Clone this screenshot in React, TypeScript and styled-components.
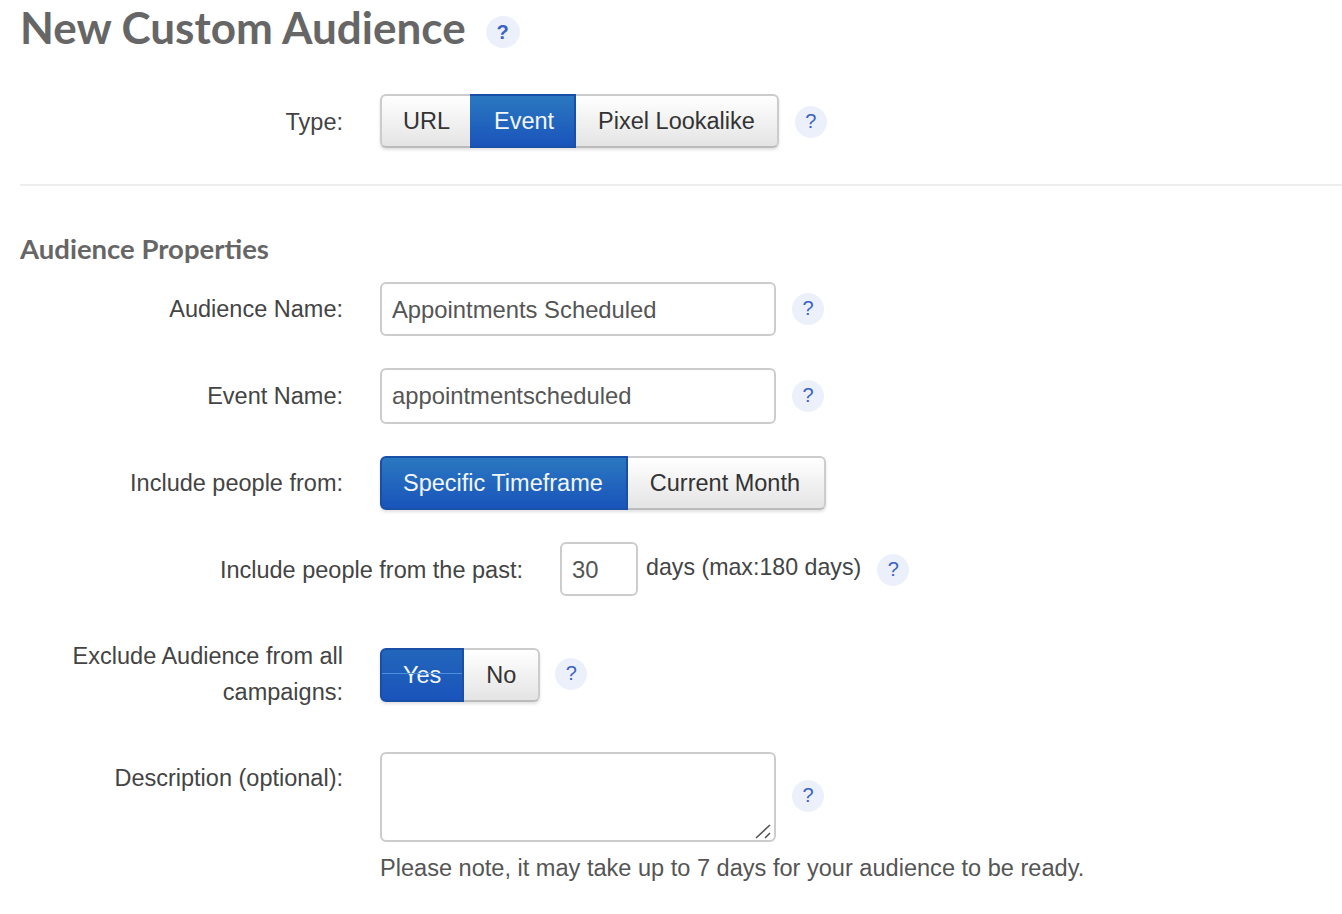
import styled, { createGlobalStyle } from "styled-components";

const GlobalStyle = createGlobalStyle`
  html, body {
    margin: 0;
    background: #fff;
  }
  body {
    font-family: "Liberation Sans", Arial, sans-serif;
    font-size: 23.5px;
    color: #444;
    overflow: hidden;
  }
`;

const Page = styled.div`
  padding: 0 0 0 20px;
  height: 914px;
  box-sizing: border-box;
`;

const TitleRow = styled.div`
  display: flex;
  align-items: center;
  height: 56px;
`;

const Title = styled.h1`
  margin: -3px 0 0;
  font-family: "Lato", sans-serif;
  font-size: 44px;
  font-weight: 700;
  line-height: 56px;
  color: #666;
`;

const Help = styled.span<{ $bold?: boolean }>`
  flex: none;
  width: 32px;
  height: 32px;
  margin-left: 16px;
  border-radius: 50%;
  background: #ebf0fa;
  color: #3a62c4;
  display: flex;
  align-items: center;
  justify-content: center;
  font-size: 20px;
  font-weight: ${(p) => (p.$bold ? 700 : 400)};
  padding-bottom: 2px;
  box-sizing: border-box;
`;

const TitleHelp = styled(Help)`
  width: 34px;
  height: 32px;
  margin: 8px 0 0 20px;
  padding: 0;
`;

const LowHelp = styled(Help)`
  margin-top: 2px;
`;

const RaisedHelp = styled(Help)`
  margin: 0 0 2px 15px;
`;

const Row = styled.div<{ $top: number }>`
  display: flex;
  align-items: center;
  margin-top: ${(p) => p.$top}px;
`;

const TopRow = styled(Row)`
  align-items: flex-start;
`;

const Label = styled.label<{ $width?: number; $drop?: number; $lift?: number }>`
  flex: none;
  width: ${(p) => p.$width ?? 323}px;
  margin-top: ${(p) => -(p.$lift ?? 0)}px;
  margin-right: 37px;
  padding-top: ${(p) => p.$drop ?? 0}px;
  text-align: right;
  line-height: 36px;
  color: #444;
`;

const Divider = styled.hr`
  margin: 36px 0 0;
  border: 0;
  border-top: 2px solid #eee;
`;

const SectionTitle = styled.h2`
  margin: 45px 0 0;
  font-family: "Lato", sans-serif;
  font-size: 27.5px;
  font-weight: 700;
  line-height: 36px;
  color: #666;
`;

const Group = styled.div`
  display: flex;
  height: 54px;
  box-shadow: 0 2px 3px rgba(0, 0, 0, 0.12);
  border-radius: 6px;
`;

const Toggle = styled.button<{ $active?: boolean; $line?: boolean; $extra?: number }>`
  position: relative;
  height: 54px;
  padding: 0 ${(p) => (p.$active ? "20px 0 24px" : "21px")};
  font: inherit;
  box-sizing: border-box;
  color: ${(p) => (p.$active ? "#f2f6fc" : "#333")};
  background: ${(p) =>
    p.$active
      ? "linear-gradient(#2a78c0, #1a54bb)"
      : "linear-gradient(#fff, #e4e4e4)"};
  border: 2px solid #ccc;
  border-bottom-color: #bbb;
  border-color: ${(p) => (p.$active ? "#1a4fa8" : "")};
  border-left-width: 0;
  border-right-width: 0;
  ${(p) => p.$active && "border-right: 2px solid #1a4fa8;"}

  &:first-child {
    padding: 0 ${(p) => (p.$active ? 21 : 20) + (p.$extra ?? 0)}px 0 21px;
    border-left-width: 2px;
    border-radius: 6px 0 0 6px;
  }
  &:last-child {
    padding: 0 ${(p) => 22 + (p.$extra ?? 0)}px 0 22px;
    border-right-width: 2px;
    border-radius: 0 6px 6px 0;
  }
  ${(p) =>
    p.$line &&
    `
    background: linear-gradient(#2266bb, #1a54bb);
    &::after {
      content: "";
      position: absolute;
      left: 0;
      right: 0;
      top: 23px;
      height: 1px;
      background: #4c8fdc;
    }
  `}
`;

const TextInput = styled.input<{ $width?: number; $height?: number }>`
  width: ${(p) => p.$width ?? 396}px;
  height: ${(p) => p.$height ?? 54}px;
  box-sizing: border-box;
  border: 2px solid #ccc;
  border-radius: 6px;
  padding: ${(p) => (p.$height ? 0 : 2)}px 10px 0;
  font: inherit;
  font-size: 23.8px;
  color: #555;
  background: #fff;
  outline: none;
`;

const DaysText = styled.span`
  margin: -3px 0 0 8px;
  font-size: 23.2px;
  color: #444;
`;

const AreaWrap = styled.div`
  position: relative;
  width: 396px;
  height: 90px;
`;

const TextArea = styled.textarea`
  display: block;
  width: 100%;
  height: 100%;
  box-sizing: border-box;
  border: 2px solid #ccc;
  border-radius: 6px;
  padding: 8px 10px;
  font: inherit;
  outline: none;
  resize: none;
`;

const Grip = styled.svg`
  position: absolute;
  right: 3px;
  bottom: 3px;
  width: 18px;
  height: 16px;
  stroke: #555;
  stroke-width: 1.6;
`;

const AreaHelp = styled(Help)`
  margin-top: 28px;
`;

const Note = styled.p`
  margin: 13px 0 0 360px;
  font-size: 23.57px;
  line-height: 26px;
  color: #555;
`;

export default function App() {
  return (
    <>
      <GlobalStyle />
      <Page>
        <TitleRow>
          <Title>New Custom Audience</Title>
          <TitleHelp $bold>?</TitleHelp>
        </TitleRow>

        <Row $top={38}>
          <Label $drop={2}>Type:</Label>
          <Group>
            <Toggle>URL</Toggle>
            <Toggle $active>Event</Toggle>
            <Toggle>Pixel Lookalike</Toggle>
          </Group>
          <LowHelp>?</LowHelp>
        </Row>

        <Divider />
        <SectionTitle>Audience Properties</SectionTitle>

        <Row $top={15}>
          <Label>Audience Name:</Label>
          <TextInput defaultValue="Appointments Scheduled" />
          <Help>?</Help>
        </Row>
        <Row $top={32}>
          <Label>Event Name:</Label>
          <TextInput $height={56} defaultValue="appointmentscheduled" />
          <Help>?</Help>
        </Row>
        <Row $top={32}>
          <Label>Include people from:</Label>
          <Group>
            <Toggle $active $extra={2}>
              Specific Timeframe
            </Toggle>
            <Toggle $extra={2}>Current Month</Toggle>
          </Group>
        </Row>
        <Row $top={32}>
          <Label $width={503} $drop={2}>
            Include people from the past:
          </Label>
          <TextInput $width={78} defaultValue="30" />
          <DaysText>days (max:180 days)</DaysText>
          <LowHelp>?</LowHelp>
        </Row>
        <Row $top={44}>
          <Label $lift={2}>
            Exclude Audience from all
            <br />
            campaigns:
          </Label>
          <Group>
            <Toggle $active $line>
              Yes
            </Toggle>
            <Toggle>No</Toggle>
          </Group>
          <RaisedHelp>?</RaisedHelp>
        </Row>
        <TopRow $top={42}>
          <Label $drop={8}>Description (optional):</Label>
          <AreaWrap>
            <TextArea />
            <Grip viewBox="0 0 18 16">
              <path d="M1 15 L15 2 M10 15 L15 10" />
            </Grip>
          </AreaWrap>
          <AreaHelp>?</AreaHelp>
        </TopRow>
        <Note>Please note, it may take up to 7 days for your audience to be ready.</Note>
      </Page>
    </>
  );
}
